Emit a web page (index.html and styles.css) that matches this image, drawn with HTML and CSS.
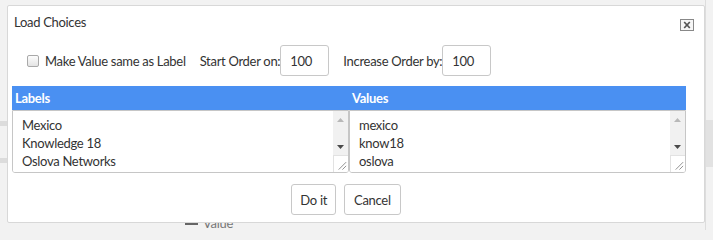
FILE: index.html
```html
<!DOCTYPE html>
<html>
<head>
<meta charset="utf-8">
<link rel="stylesheet" href="styles.css">
</head>
<body>
<div class="page">
  <div class="side-left">
    <div class="side-bar b1"></div>
    <div class="side-bar b2"></div>
  </div>
  <div class="page-main">
    <div class="field-label"><span class="drag"></span>Value</div>
  </div>
  <div class="side-right">
    <div class="side-block"></div>
  </div>
</div>

<div class="dialog" role="dialog" aria-label="Load Choices">
  <div class="dlg-head">
    <h1 class="dlg-title">Load Choices</h1>
    <button class="dlg-close" aria-label="Close">
      <svg width="14" height="12" viewBox="0 0 14 12">
        <rect x="0.5" y="0.5" width="13" height="11" fill="#f6f6f6" stroke="#888" stroke-width="1"/>
        <path d="M4.2 3 L9.8 9 M9.8 3 L4.2 9" stroke="#555" stroke-width="1.7" fill="none"/>
      </svg>
    </button>
  </div>

  <div class="options">
    <label class="chk"><input type="checkbox" class="chk-box"><span>Make Value same as Label</span></label>
    <label class="num"><span>Start Order on:</span><input class="num-input" type="text" value="100"></label>
    <label class="num"><span>Increase Order by:</span><input class="num-input" type="text" value="100"></label>
  </div>

  <div class="choices">
    <div class="col-head">Labels</div>
    <div class="col-head">Values</div>
    <div class="list-box">
      <textarea class="list">Mexico
Knowledge 18
Oslova Networks
</textarea>
      <div class="vscroll" aria-hidden="true">
        <span class="sb-btn sb-up"><svg width="7" height="4" viewBox="0 0 7 4"><polygon points="0,4 3.5,0 7,4" fill="#b8b8b8"/></svg></span>
        <span class="sb-track"></span>
        <span class="sb-btn sb-down"><svg width="7" height="4" viewBox="0 0 7 4"><polygon points="0,0 7,0 3.5,4" fill="#4a4a4a"/></svg></span>
        <span class="sb-corner"><svg width="15" height="16" viewBox="0 0 15 16"><path d="M13 6 L5 14 M13 10 L9 14" stroke="#8a8a8a" stroke-width="1" fill="none"/></svg></span>
      </div>
    </div>
    <div class="list-box">
      <textarea class="list">mexico
know18
oslova
</textarea>
      <div class="vscroll" aria-hidden="true">
        <span class="sb-btn sb-up"><svg width="7" height="4" viewBox="0 0 7 4"><polygon points="0,4 3.5,0 7,4" fill="#b8b8b8"/></svg></span>
        <span class="sb-track"></span>
        <span class="sb-btn sb-down"><svg width="7" height="4" viewBox="0 0 7 4"><polygon points="0,0 7,0 3.5,4" fill="#4a4a4a"/></svg></span>
        <span class="sb-corner"><svg width="15" height="16" viewBox="0 0 15 16"><path d="M13 6 L5 14 M13 10 L9 14" stroke="#8a8a8a" stroke-width="1" fill="none"/></svg></span>
      </div>
    </div>
  </div>

  <div class="actions">
    <button class="btn">Do it</button>
    <button class="btn">Cancel</button>
  </div>
</div>
</body>
</html>
```

FILE: styles.css
```css
html, body {
  margin: 0;
  padding: 0;
}
body {
  width: 713px;
  height: 230px;
  overflow: hidden;
  background: #f2f2f2;
  font-family: "Lato", "Noto Sans", sans-serif;
  font-size: 13px;
  letter-spacing: -0.3px;
  color: #333;
  position: relative;
}

/* background page */
.page {
  display: flex;
  height: 230px;
}
.side-left {
  width: 7px;
  display: flex;
  flex-direction: column;
  padding-top: 121px;
  gap: 32px;
}
.side-bar {
  height: 5px;
  background: #dcdcdc;
}
.page-main {
  flex: 1;
  display: flex;
  flex-direction: column;
  justify-content: flex-end;
  padding-left: 178px;
}
.field-label {
  display: flex;
  align-items: center;
  gap: 5px;
  height: 16px;
  color: #777;
  font-size: 13px;
  margin-bottom: -1px;
}
.drag {
  width: 13px;
  height: 3px;
  background: #666;
}
.side-right {
  width: 8px;
  border-left: 1px solid #ddd;
  padding-top: 120px;
  box-sizing: border-box;
}
.side-block {
  height: 47px;
  background: #e2e2e2;
}

/* dialog */
.dialog {
  position: absolute;
  left: 7px;
  top: 5px;
  width: 698px;
  height: 218px;
  box-sizing: border-box;
  background: #fff;
  border: 1px solid #d8d8d8;
  border-radius: 2px;
  display: flex;
  flex-direction: column;
}
.dlg-head {
  height: 32px;
  display: flex;
  align-items: center;
  justify-content: space-between;
  padding: 0 10px 0 6px;
}
.dlg-title {
  margin: 0;
  font-size: 13px;
  font-weight: normal;
  color: #333;
}
.dlg-close {
  border: 0;
  background: none;
  padding: 0;
  width: 14px;
  height: 12px;
  display: flex;
  margin-top: 6px;
}

.options {
  display: flex;
  align-items: center;
  height: 31px;
  margin-top: 7px;
  padding-left: 19px;
  gap: 14px;
}
.chk {
  display: flex;
  align-items: center;
  gap: 6px;
}
.chk-box {
  appearance: none;
  -webkit-appearance: none;
  margin: 0;
  width: 12px;
  height: 12px;
  border: 1px solid #a9a9a9;
  border-radius: 2px;
  background: linear-gradient(#fdfdfd, #e4e4e4);
  box-sizing: border-box;
}
.num {
  display: flex;
  align-items: center;
  gap: 0;
}
.num-input {
  width: 49px;
  height: 31px;
  box-sizing: border-box;
  border: 1px solid #c8c8c8;
  border-radius: 3px;
  padding: 0 0 0 9px;
  font-family: inherit;
  font-size: 13px;
  letter-spacing: inherit;
  color: #333;
}

.choices {
  display: grid;
  grid-template-columns: 1fr 1fr;
  grid-template-rows: 24px 63px;
  margin: 10px 18px 0 4px;
}
.col-head {
  background: #4a90f2;
  color: #fff;
  font-weight: bold;
  display: flex;
  align-items: center;
  padding-left: 3px;
}
.list-box {
  display: flex;
  height: 63px;
  box-sizing: border-box;
  border: 1px solid #c6c6c6;
  border-radius: 0 0 3px 3px;
  overflow: hidden;
  background: #fff;
}
.list {
  flex: 1;
  min-width: 0;
  margin: 0;
  border: 0;
  outline: none;
  padding: 5px 0 0 9px;
  font-family: inherit;
  font-size: 13px;
  letter-spacing: inherit;
  line-height: 18px;
  color: #333;
  overflow: hidden;
  resize: none;
}
.vscroll {
  width: 15px;
  display: flex;
  flex-direction: column;
  background: #f1f1f1;
}
.sb-btn {
  display: flex;
  align-items: center;
  justify-content: center;
}
.sb-up {
  height: 18px;
}
.sb-track {
  height: 9px;
}
.sb-down {
  height: 17px;
}
.sb-corner {
  flex: 1;
  display: flex;
  background: #fff;
  border-top: 1px solid #e2e2e2;
  border-left: 1px solid #e2e2e2;
  box-sizing: border-box;
}

.actions {
  display: flex;
  justify-content: center;
  gap: 8px;
  margin: 11px 24px 0 4px;
}
.btn {
  height: 31px;
  padding: 0 8px;
  background: #fff;
  border: 1px solid #c8c8c8;
  border-radius: 3px;
  font-family: inherit;
  font-size: 13px;
  letter-spacing: inherit;
  color: #333;
}
.btn + .btn {
  padding: 0 9px;
}
```
